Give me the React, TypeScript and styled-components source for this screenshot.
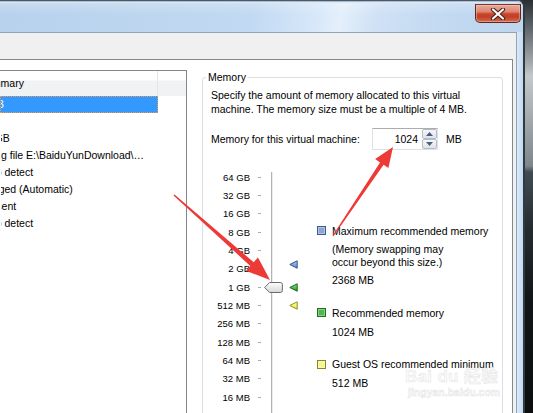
import React from 'react';
import styled, { createGlobalStyle } from 'styled-components';

const Global = createGlobalStyle`
  html, body { margin: 0; padding: 0; background: #15191b; }
  body { font-family: "Liberation Sans", Arial, sans-serif; font-size: 10.5px; color: #000; }
  #root { width: 533px; height: 413px; }
`;

const Screen = styled.div`
  position: relative;
  width: 533px;
  height: 413px;
  overflow: hidden;
  display: flex;
  background: linear-gradient(to bottom, #2a2f32 0px, #50575c 20px, #a1a7ab 62px, #c4c9cc 76px, #7f878c 166px, #3f4b53 172px, #242b2f 230px, #121517 300px, #0b0d0e 413px);
`;

const Window = styled.div`
  width: 525px;
  flex: none;
  display: flex;
  flex-direction: column;
  box-sizing: border-box;
  border-top: 1px solid #4d5863;
  border-right: 2px solid #313a41;
  border-top-right-radius: 7px;
  background: #c9def4;
`;

const TitleBar = styled.div`
  height: 31px;
  flex: none;
  display: flex;
  justify-content: flex-end;
  align-items: flex-start;
  padding-right: 2px;
  border-top-right-radius: 6px;
  box-shadow: inset 0 1px 0 #a9bed3, inset 0 2px 0 #dbe8f6;
  background:
    linear-gradient(to bottom, rgba(255,255,255,0.25) 0px, rgba(255,255,255,0) 14px),
    linear-gradient(100deg, #b8d1ec 0%, #c1d9f2 48%, #d6e7f9 60%, #e4effb 65%, #cfe1f5 72%, #c2d9f1 85%, #bdd5ef 100%);
`;

const CloseButton = styled.div`
  margin-top: 3px;
  width: 46px;
  height: 19px;
  box-sizing: border-box;
  display: flex;
  align-items: center;
  justify-content: center;
  border: 1px solid #5f281d;
  border-top-color: #7a3a2e;
  border-radius: 0 0 5px 5px;
  box-shadow: inset 0 0 0 1px rgba(255, 200, 190, 0.45);
  background: linear-gradient(to bottom, #e9ab9c 0%, #dc8670 40%, #c8452c 52%, #c24027 70%, #d16d4f 100%);
`;

const Body = styled.div`
  flex: 1;
  display: flex;
  min-height: 0;
`;

const Client = styled.div`
  width: 517px;
  flex: none;
  box-sizing: border-box;
  display: flex;
  flex-direction: column;
  background: #f0f0f0;
  border-top: 1px solid #8fa4bb;
  border-right: 1px solid #8fa4bb;
`;

const FrameSide = styled.div`
  flex: 1;
  background: linear-gradient(to right, #d9e9f9, #c4daf1);
`;

const TopStrip = styled.div`
  height: 26px;
  flex: none;
`;

const Panel = styled.div`
  flex: 1;
  width: 513px;
  box-sizing: border-box;
  display: flex;
  align-items: flex-start;
  overflow: hidden;
  background: #fff;
  border-top: 1px solid #828790;
  border-right: 1px solid #828790;
`;

const ListBox = styled.div`
  width: 187px;
  height: 420px;
  flex: none;
  box-sizing: border-box;
  margin-top: 10px;
  border-top: 1px solid #828790;
  border-right: 1px solid #828790;
  overflow: hidden;
`;

const Header = styled.div`
  height: 25px;
  display: flex;
  background: linear-gradient(to bottom, #ffffff 0%, #ffffff 36%, #f1f2f4 40%, #f1f2f4 100%);
`;

const HeaderCell = styled.div<{ $w?: number }>`
  ${(p) => (p.$w ? `width: ${p.$w}px; flex: none;` : 'flex: 1;')}
  box-sizing: border-box;
  display: flex;
  align-items: center;
  white-space: nowrap;
  overflow: hidden;
  border-right: ${(p) => (p.$w ? '1px solid #e3e5e9' : 'none')};
`;

const ClippedText = styled.span`
  margin-left: -21px;
  white-space: nowrap;
  line-height: 15px;
`;

const Row = styled.div<{ $selected?: boolean }>`
  height: 17px;
  width: 158px;
  box-sizing: border-box;
  display: flex;
  align-items: center;
  overflow: hidden;
  color: ${(p) => (p.$selected ? '#fff' : '#000')};
  background: ${(p) => (p.$selected ? '#3399ff' : 'transparent')};
  border: 1px dotted ${(p) => (p.$selected ? '#f39a3c' : 'transparent')};
`;

const Group = styled.fieldset`
  margin: 10px 0 0 15px;
  width: 301px;
  height: 420px;
  flex: none;
  box-sizing: border-box;
  min-width: 0;
  padding: 0 0 0 8px;
  border: 1px solid #d5dfe5;
  border-radius: 3px;
`;

const Legend = styled.legend`
  margin-left: -5px;
  padding: 0 2px;
  line-height: 14px;
  font-size: 10.5px;
`;

const Description = styled.p`
  margin: 4px 0 0;
  line-height: 14px;
  white-space: nowrap;
`;

const MemRow = styled.div`
  margin-top: 12px;
  height: 22px;
  display: flex;
  align-items: center;
`;

const MemLabel = styled.span`
  width: 161px;
  flex: none;
  white-space: nowrap;
`;

const SpinBox = styled.div`
  width: 66px;
  height: 22px;
  box-sizing: border-box;
  display: flex;
  padding: 0 0 0 1px;
  border: 1px solid #dde2e8;
  border-top-color: #abadb3;
  background: #fff;
`;

const SpinValue = styled.span`
  flex: 1;
  text-align: right;
  padding-right: 4px;
  line-height: 20px;
`;

const Spinner = styled.div`
  width: 15px;
  display: flex;
  flex-direction: column;
`;

const SpinButton = styled.div`
  height: 10px;
  box-sizing: border-box;
  display: flex;
  align-items: center;
  justify-content: center;
  border: 1px solid #b7bcc4;
  border-radius: 2px;
  background: linear-gradient(to bottom, #f6f7f9, #dfe3e8);
`;

const Unit = styled.span`
  margin-left: 8px;
`;

const SliderSection = styled.div`
  margin-top: 18px;
  display: flex;
  align-items: flex-start;
`;

const ScaleColumn = styled.div`
  width: 51px;
  flex: none;
  display: flex;
  flex-direction: column;
`;

const ScaleRow = styled.div`
  height: 18.333px;
  display: flex;
  align-items: center;
`;

const ScaleLabel = styled.span`
  width: 39px;
  text-align: right;
  font-size: 9.5px;
  white-space: nowrap;
`;

const Tick = styled.span`
  margin-left: 8px;
  width: 3px;
  height: 1px;
  background: #a9a9a9;
`;

const TrackColumn = styled.div`
  position: relative;
  margin-left: 9px;
  width: 2px;
  height: 260px;
  flex: none;
  &::before {
    content: '';
    position: absolute;
    top: 4px;
    bottom: 0;
    left: 0;
    width: 2px;
    background: linear-gradient(to right, #b3b3b3 50%, #ececec 50%);
  }
`;

const Thumb = styled.svg`
  position: absolute;
  left: -7px;
  width: 19px;
  height: 11px;
`;

const MarkerColumn = styled.div`
  position: relative;
  margin-left: 16px;
  width: 9px;
  height: 200px;
  flex: none;
`;

const Marker = styled.svg`
  position: absolute;
  left: 0;
  width: 9px;
  height: 9px;
`;

const LegendList = styled.div`
  margin-left: 19px;
  margin-top: 55px;
  display: flex;
  flex-direction: column;
`;

const LegendItem = styled.div<{ $first?: boolean }>`
  margin-top: ${(p) => (p.$first ? 0 : 18)}px;
`;

const LegendTitle = styled.div`
  height: 15px;
  display: flex;
  align-items: center;
  white-space: nowrap;
`;

const Swatch = styled.span<{ $fill: string; $edge: string }>`
  width: 9px;
  height: 9px;
  box-sizing: border-box;
  margin-right: 6px;
  background: ${(p) => p.$fill};
  border: 1px solid ${(p) => p.$edge};
  box-shadow: inset 0 0 0 1px rgba(255, 255, 255, 0.35);
`;

const Note = styled.div`
  margin: 4.5px 0 0 15px;
  line-height: 13px;
  white-space: nowrap;
`;

const Value = styled.div`
  margin: 4.5px 0 0 15px;
  line-height: 14px;
  white-space: nowrap;
`;

const Arrows = styled.svg`
  position: absolute;
  left: 0;
  top: 0;
  width: 533px;
  height: 413px;
  pointer-events: none;
`;

const Watermark = styled.div`
  position: absolute;
  left: 405px;
  top: 367px;
  display: flex;
  flex-direction: column;
  align-items: flex-start;
  pointer-events: none;
  color: rgba(250, 250, 250, 0.85);
  -webkit-text-stroke: 0.5px rgba(200, 200, 200, 0.5);
  font-family: "Liberation Sans", "Noto Sans CJK SC", sans-serif;
  font-weight: bold;
`;

const WatermarkBig = styled.span`
  font-size: 17px;
  line-height: 19px;
  letter-spacing: 0.3px;
`;

const WatermarkSmall = styled.span`
  font-size: 10.5px;
  line-height: 12px;
  margin-left: 3px;
`;

const listRows = [
  { text: '1 GB', selected: true },
  { text: '1' },
  { text: '20 GB' },
  { text: 'Using file E:\\BaiduYunDownload\\…' },
  { text: 'Auto detect' },
  { text: 'Bridged (Automatic)' },
  { text: 'Present' },
  { text: 'Auto detect' },
];

const scale = ['64 GB', '32 GB', '16 GB', '8 GB', '4 GB', '2 GB', '1 GB', '512 MB', '256 MB', '128 MB', '64 MB', '32 MB', '16 MB', '8 MB', '4 MB'];

const ROW = 18.333;
const centerFor = (mb: number) => ROW / 2 + (16 - Math.log2(mb)) * ROW;

const markers = [
  { mb: 2368, id: 'mb', top: '#b4cbee', bottom: '#5b84c4', edge: '#2f5496' },
  { mb: 1024, id: 'mg', top: '#8fe08f', bottom: '#1f9f1f', edge: '#16661a' },
  { mb: 512, id: 'my', top: '#ffffb8', bottom: '#e8e83c', edge: '#8f8f1c' },
];

const legend = [
  { title: 'Maximum recommended memory', note: ['(Memory swapping may', 'occur beyond this size.)'], value: '2368 MB', fill: '#8ba4d2', edge: '#3f5c8f' },
  { title: 'Recommended memory', note: [], value: '1024 MB', fill: '#4cb84c', edge: '#236b23' },
  { title: 'Guest OS recommended minimum', note: [], value: '512 MB', fill: '#f6f68c', edge: '#86862e' },
];

export default function App() {
  const thumbCenter = centerFor(1024);
  return (
    <>
      <Global />
      <Screen>
        <Window>
          <TitleBar>
            <CloseButton>
              <svg width="16" height="12" viewBox="0 0 16 12">
                <path d="M3 1.5 L13 10.5 M13 1.5 L3 10.5" stroke="#4b1d14" strokeWidth="4.2" strokeLinecap="round" />
                <path d="M3 1.5 L13 10.5 M13 1.5 L3 10.5" stroke="#ffffff" strokeWidth="2.2" strokeLinecap="round" />
              </svg>
            </CloseButton>
          </TitleBar>
          <Body>
            <Client>
              <TopStrip />
              <Panel>
                <ListBox>
                  <Header>
                    <HeaderCell $w={158}>
                      <ClippedText>Summary</ClippedText>
                    </HeaderCell>
                    <HeaderCell />
                  </Header>
                  {listRows.map((r, i) => (
                    <Row key={i} $selected={r.selected}>
                      <ClippedText>{r.text}</ClippedText>
                    </Row>
                  ))}
                </ListBox>
                <Group>
                  <Legend>Memory</Legend>
                  <Description>
                    Specify the amount of memory allocated to this virtual
                    <br />
                    machine. The memory size must be a multiple of 4 MB.
                  </Description>
                  <MemRow>
                    <MemLabel>Memory for this virtual machine:</MemLabel>
                    <SpinBox>
                      <SpinValue>1024</SpinValue>
                      <Spinner>
                        <SpinButton>
                          <svg width="7" height="4" viewBox="0 0 7 4"><path d="M0 4 L3.5 0 L7 4 Z" fill="#4a5e80" /></svg>
                        </SpinButton>
                        <SpinButton>
                          <svg width="7" height="4" viewBox="0 0 7 4"><path d="M0 0 L3.5 4 L7 0 Z" fill="#4a5e80" /></svg>
                        </SpinButton>
                      </Spinner>
                    </SpinBox>
                    <Unit>MB</Unit>
                  </MemRow>
                  <SliderSection>
                    <ScaleColumn>
                      {scale.map((s) => (
                        <ScaleRow key={s}>
                          <ScaleLabel>{s}</ScaleLabel>
                          <Tick />
                        </ScaleRow>
                      ))}
                    </ScaleColumn>
                    <TrackColumn>
                      <Thumb viewBox="0 0 19 11" style={{ top: thumbCenter - 5.5 }}>
                        <defs>
                          <linearGradient id="tg" x1="0" y1="0" x2="0" y2="1">
                            <stop offset="0" stopColor="#fdfdfd" />
                            <stop offset="1" stopColor="#d6d6d6" />
                          </linearGradient>
                        </defs>
                        <path d="M0.6 5.5 L5.6 0.5 H16.3 Q18.4 0.5 18.4 2.6 V8.4 Q18.4 10.5 16.3 10.5 H5.6 Z" fill="url(#tg)" stroke="#6b6b6b" strokeWidth="1" />
                      </Thumb>
                    </TrackColumn>
                    <MarkerColumn>
                      {markers.map((m) => (
                        <Marker key={m.id} viewBox="0 0 9 9" style={{ top: centerFor(m.mb) - 4.5 }}>
                          <defs>
                            <linearGradient id={m.id} x1="0" y1="0" x2="0" y2="1">
                              <stop offset="0" stopColor={m.top} />
                              <stop offset="1" stopColor={m.bottom} />
                            </linearGradient>
                          </defs>
                          <path d="M0.8 4.5 L8.2 0.8 V8.2 Z" fill={`url(#${m.id})`} stroke={m.edge} strokeWidth="1" strokeLinejoin="round" />
                        </Marker>
                      ))}
                    </MarkerColumn>
                    <LegendList>
                      {legend.map((l, i) => (
                        <LegendItem key={l.title} $first={i === 0}>
                          <LegendTitle>
                            <Swatch $fill={l.fill} $edge={l.edge} />
                            {l.title}
                          </LegendTitle>
                          {l.note.length > 0 && (
                            <Note>
                              {l.note.map((n, j) => (
                                <div key={j}>{n}</div>
                              ))}
                            </Note>
                          )}
                          <Value>{l.value}</Value>
                        </LegendItem>
                      ))}
                    </LegendList>
                  </SliderSection>
                </Group>
              </Panel>
            </Client>
            <FrameSide />
          </Body>
        </Window>
        <Watermark>
          <WatermarkBig>Bai du 经验</WatermarkBig>
          <WatermarkSmall>jingyan.baidu.com</WatermarkSmall>
        </Watermark>
        <Arrows viewBox="0 0 533 413">
          <polygon points="333.5,236.3 383.6,164.8 388.4,168.1 393,147 375.2,159.1 380.0,162.4 332.5,235.7" fill="#ee3a36" />
          <polygon points="174.5,194.5 253.7,262.2 258.0,257.4 270,280 246.0,270.8 250.3,266.0 173.5,195.5" fill="#ee3a36" />
        </Arrows>
      </Screen>
    </>
  );
}
